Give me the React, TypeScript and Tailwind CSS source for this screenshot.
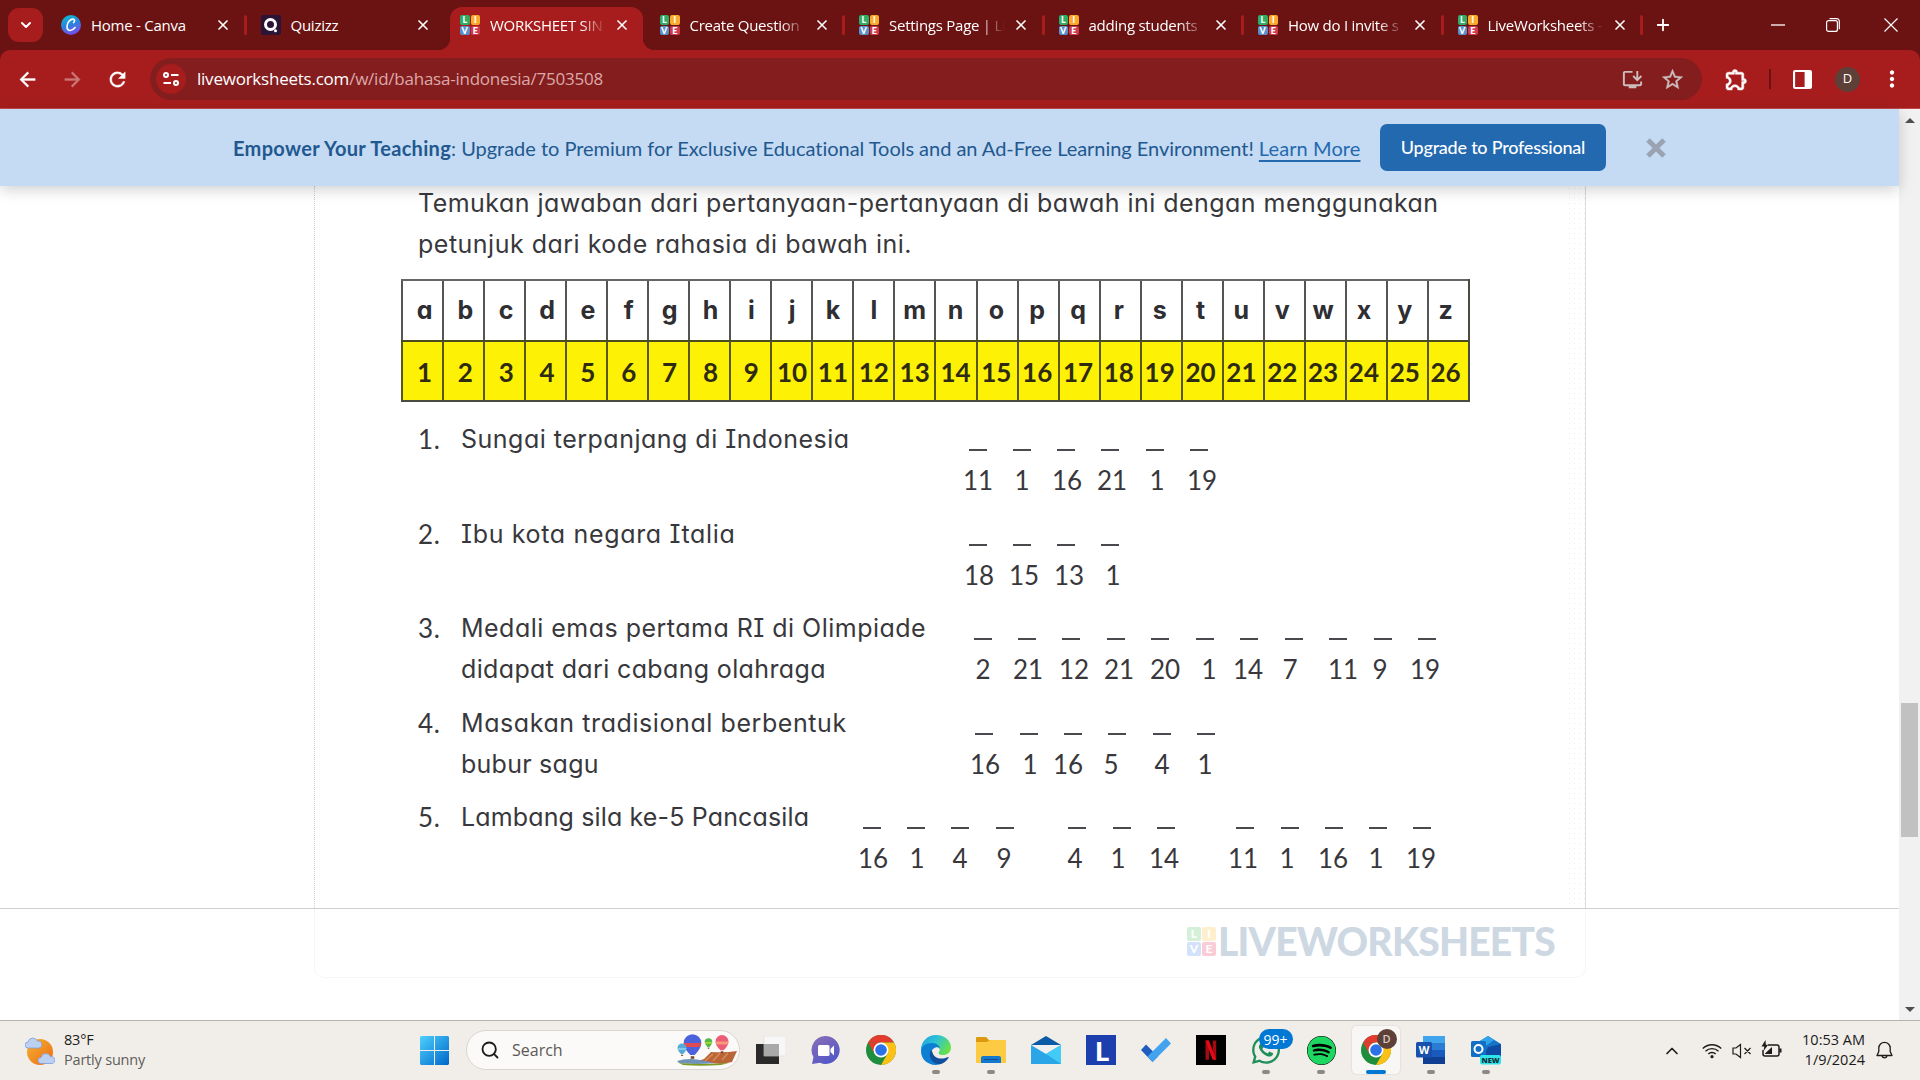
import clsx from "clsx";
import { ChevronDown, ChevronUp, Plus, Search, X } from "lucide-react";
import { FaSpotify, FaWhatsapp } from "react-icons/fa";
import {
  MdArrowBack,
  MdArrowForward,
  MdMoreVert,
  MdOutlineExtension,
  MdOutlineInstallDesktop,
  MdRefresh,
  MdStarBorder,
} from "react-icons/md";

type Tab = {
  title: string;
  icon: "canva" | "quizizz" | "live";
  active?: boolean;
  separator?: boolean;
};

const tabs: Tab[] = [
  { title: "Home - Canva", icon: "canva", separator: true },
  { title: "Quizizz", icon: "quizizz" },
  { title: "WORKSHEET SIN", icon: "live", active: true },
  { title: "Create Question", icon: "live", separator: true },
  { title: "Settings Page | Li", icon: "live", separator: true },
  { title: "adding students", icon: "live", separator: true },
  { title: "How do I invite s", icon: "live", separator: true },
  { title: "LiveWorksheets -", icon: "live", separator: true },
];

type Question = {
  lines: { text: string; tracking: string }[];
  dashes: number[];
  codes: [number, number][];
};

// dashes and codes hold the centre of each blank, from the end of the text column
const questions: Question[] = [
  {
    lines: [{ text: "Sungai terpanjang di Indonesia", tracking: "tracking-[0.49px]" }],
    dashes: [127, 171, 215, 259, 304, 348],
    codes: [[11, 127], [1, 171], [16, 216], [21, 261], [1, 306], [19, 351]],
  },
  {
    lines: [{ text: "Ibu kota negara Italia", tracking: "tracking-[0.66px]" }],
    dashes: [127, 171, 215, 259],
    codes: [[18, 128], [15, 173], [13, 218], [1, 262]],
  },
  {
    lines: [
      { text: "Medali emas pertama RI di Olimpiade", tracking: "tracking-[0.48px]" },
      { text: "didapat dari cabang olahraga", tracking: "tracking-[0.36px]" },
    ],
    dashes: [132, 176, 220, 265, 309, 354, 398, 443, 487, 532, 576],
    codes: [
      [2, 132], [21, 177], [12, 223], [21, 268], [20, 314], [1, 358],
      [14, 397], [7, 439], [11, 492], [9, 529], [19, 574],
    ],
  },
  {
    lines: [
      { text: "Masakan tradisional berbentuk", tracking: "tracking-[0.58px]" },
      { text: "bubur sagu", tracking: "tracking-[0.25px]" },
    ],
    dashes: [133, 178, 222, 266, 311, 355],
    codes: [[16, 134], [1, 179], [16, 217], [5, 260], [4, 311], [1, 354]],
  },
  {
    lines: [{ text: "Lambang sila ke-5 Pancasila", tracking: "tracking-[0.14px]" }],
    dashes: [21, 65, 109, 154, 226, 271, 315, 394, 439, 483, 527, 571],
    codes: [
      [16, 22], [1, 66], [4, 109], [9, 153], [4, 224], [1, 267],
      [14, 313], [11, 392], [1, 436], [16, 482], [1, 525], [19, 570],
    ],
  },
];

const letters = "abcdefghijklmnopqrstuvwxyz".split("");

function LiveIcon() {
  const tile = "flex items-center justify-center rounded-[2px]";
  return (
    <div className="grid size-5 shrink-0 grid-cols-2 grid-rows-2 gap-px font-['Lato',sans-serif] text-[9px] leading-none font-black text-white">
      <span className={clsx(tile, "bg-[#2fac66]")}>L</span>
      <span className={clsx(tile, "bg-[#faab2c]")}>I</span>
      <span className={clsx(tile, "bg-[#5b8fc9]")}>V</span>
      <span className={clsx(tile, "bg-[#cf3a50]")}>E</span>
    </div>
  );
}

function CanvaIcon() {
  return (
    <div className="flex size-5 shrink-0 items-center justify-center rounded-full bg-linear-160 from-[#00c4cc] via-[#2a7fe0] to-[#7d2ae8]">
      <svg viewBox="0 0 20 20" className="size-5" fill="none" stroke="#fff" strokeWidth="1.6" strokeLinecap="round">
        <path d="M12.6 7.6c1.200-.9 1.400-3.300-.5-3.500C9.300 3.900 6 7.600 6 11.500c0 5 4.800 5.200 8 1" />
      </svg>
    </div>
  );
}

function QuizizzIcon() {
  return (
    <svg viewBox="0 0 20 20" className="size-5 shrink-0">
      <rect width="20" height="20" rx="2" fill="#2b1436" />
      <circle cx="9.500" cy="9.500" r="5" fill="none" stroke="#fff" strokeWidth="3" />
      <circle cx="14.500" cy="15.800" r="1.500" fill="#fff" />
    </svg>
  );
}

function TabItem({ tab }: { tab: Tab }) {
  return (
    <div className="relative flex h-[50px] w-[199.5px] shrink-0 pt-2">
      {tab.active && (
        <div className="absolute top-[7px] right-[3px] bottom-0 left-1 rounded-t-[12px] bg-[#a71d1d]">
          <div className="absolute bottom-0 -left-3 size-3 bg-[radial-gradient(circle_at_0_0,transparent_12px,#a71d1d_12.5px)]" />
          <div className="absolute -right-3 bottom-0 size-3 bg-[radial-gradient(circle_at_100%_0,transparent_12px,#a71d1d_12.5px)]" />
        </div>
      )}
      <div className="relative flex h-[34px] w-full items-center pl-[14px]">
        {tab.icon === "canva" && <CanvaIcon />}
        {tab.icon === "quizizz" && <QuizizzIcon />}
        {tab.icon === "live" && <LiveIcon />}
        <span
          className={clsx(
            "ml-[10px] w-[116px] text-[15px] tracking-[-0.25px] whitespace-nowrap text-white",
            tab.icon === "live" && "[mask-image:linear-gradient(to_right,black_78%,transparent_100%)]"
          )}
        >
          {tab.title}
        </span>
        <X className="ml-[8px] size-4 shrink-0 text-white" strokeWidth={2.5} />
        {tab.separator && <span className="ml-auto h-5 w-[3px] shrink-0 rounded-full bg-[#a71d1d]" />}
      </div>
    </div>
  );
}

function TabStrip() {
  return (
    <div className="flex h-[50px] bg-[#6b1212]">
      <div className="mt-2 mr-[4px] ml-2 flex h-[34px] w-[35px] shrink-0 items-center justify-center rounded-[11px] bg-[#a71d1d] text-white">
        <ChevronDown className="size-4" strokeWidth={3} />
      </div>
      {tabs.map((tab) => (
        <TabItem key={tab.title} tab={tab} />
      ))}
      <div className="ml-[11px] flex h-[50px] items-center text-white">
        <Plus className="size-[18px]" strokeWidth={2.4} />
      </div>
      <div className="ml-auto flex h-[50px] items-center text-white">
        <svg viewBox="0 0 14 14" className="mr-[41px] size-[14px]">
          <path d="M0 7h14" stroke="currentColor" strokeWidth="1.300" />
        </svg>
        <svg viewBox="0 0 14 14" className="mr-[44px] size-[14px]" fill="none" stroke="currentColor" strokeWidth="1.200">
          <rect x="0.600" y="2.600" width="10.800" height="10.800" rx="2" />
          <path d="M3.500.7h7.300a2.500 2.500 0 0 1 2.500 2.500v8" />
        </svg>
        <svg viewBox="0 0 14 14" className="mr-[22px] size-[14px]" stroke="currentColor" strokeWidth="1.200">
          <path d="M.5.5l13 13M13.500.5l-13 13" />
        </svg>
      </div>
    </div>
  );
}

function Toolbar() {
  return (
    <div className="h-[59px] bg-[#6b1212]">
      <div className="flex h-[59px] items-center rounded-t-[10px] border-b border-[#c14b4b] bg-[#a71d1d] pl-[16px] text-white">
        <MdArrowBack className="size-[23px] [&>path:last-child]:[stroke-width:0.4]" />
        <MdArrowForward className="ml-[22px] size-[23px] text-[#ca7777] [&>path:last-child]:[stroke-width:0.4]" />
        <MdRefresh className="ml-[22px] size-[23px] [&>path:last-child]:[stroke-width:0.4]" />
        <div className="ml-[21px] flex h-[42px] w-[1552px] items-center rounded-full bg-[#841d1e] pl-[6px]">
          <div className="flex size-[30px] items-center justify-center rounded-full bg-[#a71d1d]">
            <svg viewBox="0 0 16 16" className="size-4" fill="none" stroke="#fff" strokeWidth="2">
              <circle cx="3" cy="4" r="2" />
              <path d="M8 4h7.500M.5 12H8" />
              <circle cx="13" cy="12" r="2" />
            </svg>
          </div>
          <span className="ml-[11px] text-[17px] tracking-[-0.23px] whitespace-nowrap text-[#dca9a9]">
            <span className="text-white">liveworksheets.com</span>
            /w/id/bahasa-indonesia/7503508
          </span>
          <MdOutlineInstallDesktop className="ml-auto size-[23px] text-[#cdbcbc]" />
          <MdStarBorder className="mr-[17px] ml-[16px] size-[25px] text-[#cdbcbc] [&>path:last-child]:[stroke-width:0.3]" />
        </div>
        <MdOutlineExtension className="ml-[22px] size-[25px] [&>path:last-child]:[stroke-width:0.5]" />
        <span className="ml-[20px] h-5 w-[2px] bg-[#6b1212]" />
        <svg viewBox="0 0 18 18" className="ml-[22px] size-[19px]">
          <rect x="1" y="1" width="16" height="16" rx="1" fill="none" stroke="#fff" strokeWidth="2" />
          <path d="M11 1h6v16h-6z" fill="#fff" />
        </svg>
        <span className="ml-[23px] flex size-[25px] items-center justify-center rounded-full bg-[#5d4037] text-[13px]">
          D
        </span>
        <MdMoreVert className="ml-[19px] size-[26px]" />
      </div>
    </div>
  );
}

function Banner() {
  return (
    <div className="relative z-10 flex h-[77px] shrink-0 items-center bg-[#c5daf3] pl-[233px] font-['Lato',sans-serif] text-[#21588f] shadow-[0_4px_14px_rgba(0,0,0,0.18)] [font-variant-ligatures:none]">
      <p className="w-[1147px] text-[20px] tracking-[-0.03px] whitespace-nowrap">
        <b className="tracking-[0.32px]">Empower Your Teaching</b>: Upgrade to Premium for Exclusive Educational Tools
        and an Ad-Free Learning Environment!{" "}
        <a className="tracking-[0.1px] text-[#2369af] underline decoration-2 underline-offset-[4px]">Learn More</a>
      </p>
      <button className="h-[47px] w-[226px] rounded-[7px] bg-[#2369af] text-[18px] font-medium tracking-[-0.23px] whitespace-nowrap text-white">
        Upgrade to Professional
      </button>
      <svg viewBox="0 0 20 20" className="ml-[40px] size-5" stroke="#9aa3b2" strokeWidth="5">
        <path d="M2 2l16 16M18 2L2 18" />
      </svg>
    </div>
  );
}

function CodeTable() {
  return (
    <div className="mt-[14px] ml-[86px] w-[1069px] border-r-2 border-b-2 border-[#4b4b42] font-bold text-[#2e2e33]">
      <div className="grid h-[61px] grid-cols-[repeat(26,minmax(0,1fr))] border-t-2 border-[#666]">
        {letters.map((letter, index) => (
          <span
            key={letter}
            className="flex items-center justify-center border-l-2 border-[#555] pb-px pl-1 text-[25px]"
            style={{ paddingRight: index * 0.39 }}
          >
            {letter}
          </span>
        ))}
      </div>
      <div className="grid h-[60px] grid-cols-[repeat(26,minmax(0,1fr))] border-t-2 border-[#4b4b20] bg-[#fdf205] font-['Lato',sans-serif] text-[#2f2a12]">
        {letters.map((letter, index) => (
          <span
            key={letter}
            className="flex items-center justify-center border-l-2 border-[#5a5714] pt-[3px] pl-1 text-[26px]"
            style={{ paddingRight: index * 0.39 }}
          >
            {index + 1}
          </span>
        ))}
      </div>
    </div>
  );
}

function Blanks({ question }: { question: Question }) {
  const { dashes, codes } = question;
  return (
    <div className="flex flex-col">
      <div className="mt-[30px] flex">
        {dashes.map((x, index) => (
          <span
            key={x}
            className="h-[2px] w-[18px] shrink-0 bg-[#4a4a4e]"
            style={{ marginLeft: x - 9 - (index ? dashes[index - 1] + 9 : 0) }}
          />
        ))}
      </div>
      <div className="mt-[11px] flex font-['Lato',sans-serif] text-[26px] leading-[36px]">
        {codes.map(([code, x], index) => (
          <span
            key={x}
            className="w-[34px] shrink-0 text-center"
            style={{ marginLeft: index ? x - codes[index - 1][1] - 34 : x - 17 }}
          >
            {code}
          </span>
        ))}
      </div>
    </div>
  );
}

function Worksheet() {
  return (
    <div className="h-[723px] shrink-0 overflow-hidden border-b border-[#cfcfcf]">
      <div className="ml-[314px] flex h-full w-[1272px] flex-col border-r border-l border-r-[#dedede] border-l-[#d0d0d0] [border-left-style:dotted] bg-[radial-gradient(#ededed_0.6px,transparent_1px)] bg-[length:5px_5px] bg-[position:right_3px_top] pr-[16px]">
        <div className="flex flex-1 flex-col bg-white font-['Inter',sans-serif] text-[25px] leading-[41px] text-[#38383c] [font-feature-settings:'cv11','cv08']">
          <div className="-mt-[3px] ml-[103px] whitespace-nowrap">
            <p className="tracking-[0.46px]">
              Temukan jawaban dari pertanyaan-pertanyaan di bawah ini dengan menggunakan
            </p>
            <p className="tracking-[0.5px]">petunjuk dari kode rahasia di bawah ini.</p>
          </div>
          <CodeTable />
          <ol className="mt-[17px] ml-[103px]">
            {questions.map((question, index) => (
              <li key={index} className="flex h-[94.6px]">
                <span className="w-[43px] shrink-0 font-['Lato',sans-serif] text-[26px] tracking-[0.7px]">
                  {index + 1}.
                </span>
                <div className="w-[390px] shrink-0 whitespace-nowrap">
                  {question.lines.map((line) => (
                    <p key={line.text} className={line.tracking}>
                      {line.text}
                    </p>
                  ))}
                </div>
                <Blanks question={question} />
              </li>
            ))}
          </ol>
        </div>
      </div>
    </div>
  );
}

function WorksheetFooter() {
  const tile = "flex items-center justify-center rounded-[2px]";
  return (
    <div className="flex-1">
      <div className="ml-[314px] flex h-[69px] w-[1272px] justify-end rounded-b-[10px] border border-t-0 border-[#f6f6f6] pr-[31px]">
        <div className="mt-[18px] flex h-[29px] font-['Lato',sans-serif]">
          <div className="grid size-[29px] grid-cols-2 gap-px text-[12px] leading-none font-black text-white">
            <span className={clsx(tile, "bg-[#d5f0d9]")}>L</span>
            <span className={clsx(tile, "bg-[#ffefcc]")}>I</span>
            <span className={clsx(tile, "bg-[#d3e1fa]")}>V</span>
            <span className={clsx(tile, "bg-[#fbcbd6]")}>E</span>
          </div>
          <span className="w-[338px] pl-[2px] text-[39px] leading-[29px] font-black tracking-[-0.8px] whitespace-nowrap text-[#cdd8e3]">
            LIVEWORKSHEETS
          </span>
        </div>
      </div>
    </div>
  );
}

function ScrollBar() {
  return (
    <div className="flex w-[21px] shrink-0 flex-col items-center bg-[#f1f1f1] text-[#4f4f4f]">
      <svg viewBox="0 0 10 5" className="mt-[9px] h-[5px] w-[10px]" fill="currentColor">
        <path d="M5 0l5 5H0z" />
      </svg>
      <div className="mt-[580px] h-[134px] w-[17px] bg-[#c1c1c1]" />
      <svg viewBox="0 0 10 5" className="mt-auto mb-[8px] h-[5px] w-[10px]" fill="currentColor">
        <path d="M5 5l5-5H0z" />
      </svg>
    </div>
  );
}

function ChromeIcon() {
  return (
    <svg viewBox="0 0 30 30" className="size-[30px]">
      <circle cx="15" cy="15" r="15" fill="#1e8e3e" />
      <path d="M2 7.500A15 15 0 0 1 28 7.500H15z" fill="#e33b2e" />
      <path d="M28 7.500A15 15 0 0 1 15 30l6.500-11.300L15 7.500z" fill="#fbc116" />
      <path d="M2 7.500l6.500 11.300L15 15l0-7.500z" fill="#e33b2e" />
      <circle cx="15" cy="15" r="7.500" fill="#fff" />
      <circle cx="15" cy="15" r="5.800" fill="#2b72e8" />
    </svg>
  );
}

function EdgeIcon() {
  return (
    <svg viewBox="0 0 30 30" className="size-[30px]">
      <defs>
        <linearGradient id="edge-top" x1="0" y1="0" x2="1" y2="0.500">
          <stop offset="0" stopColor="#1b9de2" />
          <stop offset="0.500" stopColor="#2cc3d5" />
          <stop offset="1" stopColor="#66e04f" />
        </linearGradient>
      </defs>
      <path d="M0 15C0 6 7 0 15 0c9 0 15 6 15 12.500 0 5-4 7.500-8 7.500-4 0-5-1.500-4-3 2-3 0-7-5-7C7 10 2 12 0 15z" fill="url(#edge-top)" />
      <path d="M0 16c0-5 5-8 11-8 5 0 8 3 8 6-1-1.500-3-2-4.500-1.500C10 14 9 19 12 24c1.500 3 4 5 6 5.600C8 31.500 0 25 0 16z" fill="#0c7fd3" />
      <path d="M10 15c-3 6 0 13 8 14.600 4-.8 7.500-3.200 9.500-6.600.5-1-.4-1.200-1-.8-6 3-14 1-15-5z" fill="#114f9b" />
    </svg>
  );
}

function WeatherIcon() {
  return (
    <svg viewBox="0 0 30 28" className="h-[28px] w-[30px]">
      <defs>
        <linearGradient id="sun" x1="0" y1="0" x2="1" y2="1">
          <stop offset="0" stopColor="#f2b434" />
          <stop offset="1" stopColor="#ef6a12" />
        </linearGradient>
      </defs>
      <circle cx="15" cy="15" r="13" fill="url(#sun)" />
      <g fill="#bcd0f2" stroke="#7f9fd9" strokeWidth="0.800">
        <path d="M3 11a3 3 0 0 1 0-6 5 5 0 0 1 9.500-.8A3.400 3.400 0 0 1 14 11z" />
        <path d="M16 26.500a3 3 0 0 1 0-6 5 5 0 0 1 9.500-.8 3.400 3.400 0 0 1 1.500 6.800z" />
      </g>
    </svg>
  );
}

function WindowsIcon() {
  return (
    <svg viewBox="0 0 29 29" className="size-[29px]">
      <defs>
        <linearGradient id="win" gradientUnits="userSpaceOnUse" x1="0" y1="0" x2="29" y2="29">
          <stop offset="0" stopColor="#4dd0ff" />
          <stop offset="1" stopColor="#0067c9" />
        </linearGradient>
      </defs>
      <path d="M1 0h13v14H0V1zM15 0h13l1 1v13H15zM0 15h14v14H1l-1-1zM15 15h14v13l-1 1H15z" fill="url(#win)" />
    </svg>
  );
}

function Balloon({ x, y, r, color, stripe }: { x: number; y: number; r: number; color: string; stripe: string }) {
  return (
    <g>
      <path
        d={`M${x - r} ${y}A${r} ${r} 0 0 1 ${x + r} ${y}Q${x + r} ${y + r * 0.6} ${x + r * 0.25} ${y + r * 1.35}H${x - r * 0.25}Q${x - r} ${y + r * 0.6} ${x - r} ${y}z`}
        fill={color}
      />
      <path d={`M${x - r} ${y}H${x + r}L${x + r * 0.85} ${y + r * 0.45}H${x - r * 0.85}z`} fill={stripe} />
      <path d={`M${x - r * 0.2} ${y + r * 1.5}h${r * 0.4}v${r * 0.3}h-${r * 0.4}z`} fill="#7a4a2e" />
    </g>
  );
}

function BalloonsIcon() {
  return (
    <svg viewBox="0 0 60 32" className="h-[32px] w-[60px]">
      <path d="M18 28l9-3 7-7q14 1 26-1l-5 11-10 2z" fill="#b9653a" />
      <path d="M28 27l8-7M36 27l7-8M45 26l6-7" stroke="#dc8a52" strokeWidth="1.500" />
      <path d="M0 27q12-4 28 0l10 2q-18 2-36 0z" fill="#6f93b8" />
      <path d="M2 29q22 2 50 0l-8 2q-20 1.500-38 0z" fill="#7d9c1f" />
      <Balloon x={15.500} y={9} r={8.800} color="#4d63dc" stripe="#e14a53" />
      <Balloon x={5} y={14} r={4.500} color="#55aad6" stripe="#83cbe8" />
      <Balloon x={31.500} y={8} r={3.800} color="#55b848" stripe="#a9d93f" />
      <Balloon x={45} y={7.500} r={6.500} color="#ed5c75" stripe="#f7997d" />
    </svg>
  );
}

function TaskViewIcon() {
  return (
    <svg viewBox="0 0 30 28" className="h-[28px] w-[30px]">
      <path d="M0 8h23v20H0z" fill="#2a2a2a" />
      <path d="M8 0h22v20H8z" fill="#f7f7f7" stroke="#dcdcdc" strokeWidth="0.600" />
      <path d="M8 8h15v12H8z" fill="#a9a9a9" />
    </svg>
  );
}

function ChatIcon() {
  return (
    <svg viewBox="0 0 30 30" className="size-[30px]">
      <defs>
        <linearGradient id="chat" x1="0" y1="0" x2="0.600" y2="1">
          <stop offset="0" stopColor="#8b6fb5" />
          <stop offset="1" stopColor="#5458c8" />
        </linearGradient>
      </defs>
      <path d="M15 1a14 14 0 1 1-6 26.800L1 29l1.500-7A14 14 0 0 1 15 1z" fill="url(#chat)" />
      <rect x="7" y="10" width="11.500" height="11" rx="1.500" fill="#fff" />
      <path d="M19.500 14l3.500-3.500v10L19.500 17z" fill="#fff" />
    </svg>
  );
}

function FolderIcon() {
  return (
    <svg viewBox="0 0 30 28" className="mt-[2px] h-[28px] w-[30px]">
      <path d="M0 1q0-1 1-1h9l3 3h16v6H0z" fill="#dd9a10" />
      <path d="M0 5h11l3-2h15q1 0 1 1v22H0z" fill="#fccb43" />
      <path d="M5 26v-5q0-2 2-2h16q2 0 2 2v5z" fill="#1479ce" />
      <path d="M8 22.500h14" stroke="#0d4f92" strokeWidth="1" />
    </svg>
  );
}

function MailIcon() {
  return (
    <svg viewBox="0 0 30 28" className="h-[28px] w-[30px]">
      <path d="M0 9L15 0l15 9z" fill="#0c5aa5" />
      <path d="M3 9h24L15 19z" fill="#f0f0f0" />
      <path d="M0 9l15 9L30 9v19H0z" fill="#2aa6e8" />
      <path d="M30 9v19L15 18z" fill="#41cbf6" />
    </svg>
  );
}

function TodoIcon() {
  return (
    <svg viewBox="0 0 30 24" className="h-[24px] w-[30px]">
      <path d="M0 12l5-5.500 12 12L11.500 24z" fill="#1e5dbf" />
      <path d="M6.500 18.500L25 0l5 5.500L11.500 24z" fill="#43a3ee" />
    </svg>
  );
}

function NetflixIcon() {
  return (
    <svg viewBox="0 0 30 30" className="size-[30px]">
      <path d="M0 0h30v30H0z" fill="#000" />
      <path d="M9.500 5.500H13v19l-3.500.4zM16.700 5.500h3.500v19.400l-3.500-.4z" fill="#a50912" />
      <path d="M9.500 5.500H13l7.200 19.400-3.700-.5z" fill="#e50914" />
    </svg>
  );
}

function WordIcon() {
  return (
    <svg viewBox="0 0 30 28" className="h-[28px] w-[30px]">
      <path d="M7 0h22v7H7z" fill="#41a5ee" />
      <path d="M7 7h22v7H7z" fill="#2b7cd3" />
      <path d="M7 14h22v7H7z" fill="#185abd" />
      <path d="M7 21h22v7H7z" fill="#103f91" />
      <rect x="0" y="6" width="16" height="15.500" rx="1.500" fill="#1a50ad" />
      <text x="8" y="17.800" textAnchor="middle" fontFamily="Open Sans" fontSize="11" fontWeight="700" fill="#fff">
        W
      </text>
    </svg>
  );
}

function OutlookIcon() {
  return (
    <svg viewBox="0 0 30 30" className="size-[30px]">
      <path d="M4 9L17 1l13 8v13H4z" fill="#1275c9" />
      <path d="M4 9L17 1l6 4L9 15z" fill="#30a4ea" />
      <path d="M17 12l13-3v13H12z" fill="#0f4ba5" />
      <rect x="0" y="6" width="15" height="16" rx="1.500" fill="#116fc5" />
      <circle cx="7.500" cy="14" r="4" fill="none" stroke="#fff" strokeWidth="2" />
      <rect x="9" y="20" width="21" height="9.500" rx="2" fill="#30e2ea" />
      <text x="19.500" y="27.600" textAnchor="middle" fontFamily="Open Sans" fontSize="7.500" fontWeight="800" fill="#10333c">
        NEW
      </text>
    </svg>
  );
}

const apps = [
  { name: "taskview", icon: <TaskViewIcon /> },
  { name: "chat", icon: <ChatIcon /> },
  { name: "chrome", icon: <ChromeIcon /> },
  { name: "edge", icon: <EdgeIcon />, running: true },
  { name: "explorer", icon: <FolderIcon />, running: true },
  { name: "mail", icon: <MailIcon /> },
  {
    name: "l",
    icon: (
      <span className="flex size-[30px] items-center justify-center bg-[#1d3ead] pl-[2px] font-['Lato',sans-serif] text-[27px] leading-none font-black text-white">
        L
      </span>
    ),
  },
  { name: "todo", icon: <TodoIcon /> },
  { name: "netflix", icon: <NetflixIcon /> },
  { name: "whatsapp", icon: <FaWhatsapp className="size-[32px] text-[#1f8f5a]" />, running: true, badge: "99+" },
  {
    name: "spotify",
    icon: <FaSpotify className="size-[29px] rounded-full bg-black text-[#1ed760]" />,
    running: true,
  },
  { name: "chrome-profile", icon: <ChromeIcon />, active: true, profile: "D" },
  { name: "word", icon: <WordIcon />, running: true },
  { name: "outlook", icon: <OutlookIcon />, running: true },
];

function Taskbar() {
  return (
    <div className="flex h-[60px] border-t border-[#b5b2b0] bg-[#f1eee9] text-[#1b1b1b]">
      <div className="flex w-[420px] items-center pl-[25px]">
        <WeatherIcon />
        <div className="-mt-[2px] ml-[9px] text-[14.500px] leading-5 tracking-[-0.2px]">
          <p>83°F</p>
          <p className="text-[#5f5d5b]">Partly sunny</p>
        </div>
      </div>
      <div className="flex items-center">
        <WindowsIcon />
      </div>
      <div className="mt-[9px] ml-[17px] flex h-[40px] w-[274px] items-center rounded-full border border-[#d9d6d2] bg-[#fbfaf9] pr-[2px] pl-[13px]">
        <Search className="size-[20px]" strokeWidth={2.200} />
        <span className="ml-[12px] text-[16px] text-[#5b5957]">Search</span>
        <div className="ml-auto">
          <BalloonsIcon />
        </div>
      </div>
      <div className="ml-[3.500px] flex">
        {apps.map((app) => (
          <div key={app.name} className="relative flex w-[55px] justify-center pt-[5px]">
            <div
              className={clsx(
                "flex h-[48px] w-[48px] items-center justify-center rounded-[5px]",
                app.active && "bg-[#f9f7f5] shadow-[0_0_1px_1px_rgba(0,0,0,0.05)]"
              )}
            >
              {app.icon}
            </div>
            {app.badge && (
              <span className="absolute top-[8px] left-[20px] flex h-5 w-[34px] items-center justify-center rounded-full bg-[#0078d4] text-[14px] text-white">
                {app.badge}
              </span>
            )}
            {app.profile && (
              <span className="absolute top-[8px] left-[28px] flex size-5 items-center justify-center rounded-full bg-[#5d4037] text-[11px] font-semibold text-[#d8ccc8]">
                {app.profile}
              </span>
            )}
            {app.running && <span className="absolute top-[49px] h-[4px] w-[8px] rounded-full bg-[#8b8885]" />}
            {app.active && <span className="absolute top-[49px] h-[4px] w-[20px] rounded-full bg-[#0078d4]" />}
          </div>
        ))}
      </div>
      <div className="ml-auto flex items-center">
        <ChevronUp className="size-[20px]" strokeWidth={2} />
        <svg viewBox="0 0 20 16" className="ml-[20px] h-[16px] w-[20px]" fill="none" stroke="currentColor" strokeWidth="1.400">
          <path d="M.8 5.500a13 13 0 0 1 18.400 0M3.500 8.300a9.200 9.200 0 0 1 13 0M6.300 11a5.200 5.200 0 0 1 7.400 0" />
          <circle cx="10" cy="13.700" r="1.600" fill="currentColor" stroke="none" />
        </svg>
        <svg viewBox="0 0 20 16" className="ml-[10px] h-[16px] w-[20px]" fill="none" stroke="currentColor" strokeWidth="1.200">
          <path d="M1 5h3l4.500-3.500v13L4 11H1zM12.500 5l6 6M18.500 5l-6 6" />
        </svg>
        <svg viewBox="0 0 21 18" className="-mt-[3px] ml-[9px] h-[18px] w-[21px]">
          <path d="M7 5h9q2 0 2 2v7q0 2-2 2H4q-2 0-2-2v-4" fill="none" stroke="currentColor" strokeWidth="1.500" />
          <path d="M4 13.500L11 7v7H4zM18.500 8.500h2v4h-2zM4.500 0L.5 6.500h2.800L2.500 11l4.700-6.200H4.800z" fill="currentColor" />
        </svg>
        <div className="-mt-[2px] ml-[16px] w-[67px] text-right text-[14.500px] leading-5 whitespace-nowrap">
          <p>10:53 AM</p>
          <p>1/9/2024</p>
        </div>
        <svg viewBox="0 0 17 19" className="mr-[27px] ml-[11px] h-[19px] w-[17px]" fill="none" stroke="currentColor" strokeWidth="1.300">
          <path d="M1 14.500l1.800-4V7a5.700 5.700 0 0 1 11.400 0v3.500l1.800 4zM6 15a2.600 2.600 0 0 0 5 0" strokeLinejoin="round" />
        </svg>
      </div>
    </div>
  );
}

export default function App() {
  return (
    <div className="flex h-[1080px] w-[1920px] flex-col overflow-hidden bg-white font-['Open_Sans',sans-serif]">
      <TabStrip />
      <Toolbar />
      <main className="flex h-[911px]">
        <div className="flex w-[1899px] flex-col">
          <Banner />
          <Worksheet />
          <WorksheetFooter />
        </div>
        <ScrollBar />
      </main>
      <Taskbar />
    </div>
  );
}
